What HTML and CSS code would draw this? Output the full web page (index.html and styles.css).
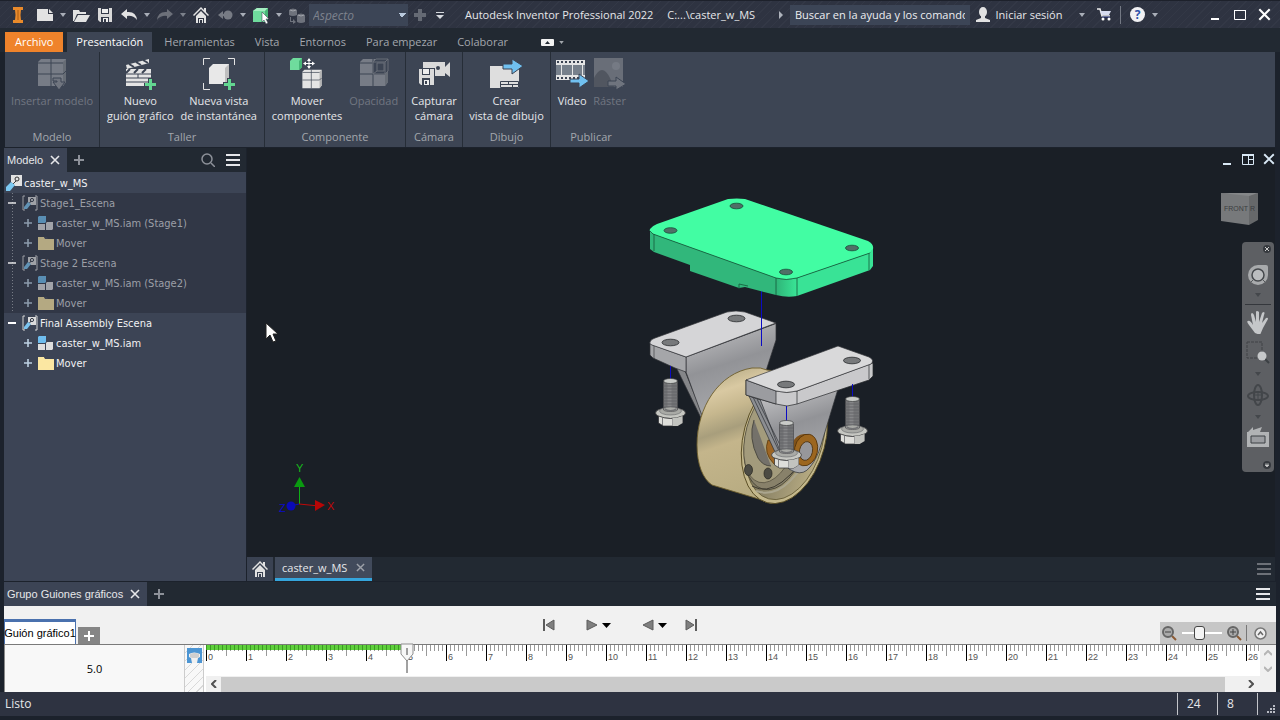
FILE: index.html
```html
<!DOCTYPE html>
<html lang="es">
<head>
    <meta charset="UTF-8">
    <meta name="viewport" content="width=device-width, initial-scale=1.0">
    <title>Autodesk Inventor Professional 2022</title>
    <link rel="stylesheet" href="styles.css">
</head>
<body>
    <!-- shared icons -->
    <svg class="defs" width="0" height="0" aria-hidden="true">
        <symbol id="caret" viewBox="0 0 6 4"><path d="M0 0h6L3 4z" fill="currentColor"/></symbol>
        <symbol id="close" viewBox="0 0 10 10"><path d="M1 1l8 8M9 1l-8 8" stroke="currentColor" stroke-width="1.6" fill="none"/></symbol>
        <symbol id="plus" viewBox="0 0 10 10"><path d="M5 0v10M0 5h10" stroke="currentColor" stroke-width="2" fill="none"/></symbol>
        <symbol id="minus" viewBox="0 0 10 10"><path d="M1 5h8" stroke="currentColor" stroke-width="2" fill="none"/></symbol>
        <symbol id="menu" viewBox="0 0 14 12"><path d="M0 1h14M0 6h14M0 11h14" stroke="currentColor" stroke-width="2" fill="none"/></symbol>
        <symbol id="home" viewBox="0 0 16 16">
            <path d="M0 8L8 0l3 3V1h2v4l3 3-1 1-7-7-7 7z" fill="#e2e2e2"/>
            <path d="M3 9l5-5 5 5v7h-2v-5H5v5H3z" fill="#e2e2e2"/>
            <path d="M6 12h1v4H6zM9 12h1v4H9zM7 12h2v1H7z" fill="#e2e2e2"/>
        </symbol>
        <symbol id="blocks" viewBox="0 0 32 32">
            <path d="M2 4l3-3h25v23l-3 4H2z" fill="#e4e4e4"/>
            <path d="M27 4l3-3v23l-3 4z" fill="#b4b4b4"/>
            <path d="M15 1v27M2 16h25l3-3M2 5h25" stroke="#3b4352" stroke-width="1" fill="none"/>
        </symbol>
        <symbol id="scene" viewBox="0 0 16 16">
            <path d="M3 1H1v14h2M13 1h2v14h-2" stroke="#d5d5d5" fill="none"/>
            <path d="M6 2h8v8H9L6 7z" fill="#dcdcdc"/>
            <circle cx="10" cy="5" r="1.6" fill="none" stroke="#333a47"/>
            <path d="M9 6l-3 4" stroke="#333a47"/>
            <path d="M2 12l4-5 3 2-4 5H2z" fill="#7cc4ef"/>
        </symbol>
        <symbol id="assembly" viewBox="0 0 16 16">
            <path d="M0 2l1-1h7v6L7 8H0z" fill="#6fbdee"/>
            <path d="M0 9h7v6H0zM8 8l1-1h6v7l-1 1H8z" fill="#dedede"/>
        </symbol>
        <symbol id="folder" viewBox="0 0 16 14">
            <path d="M0 1h6l2 2h8v11H0z" fill="#fbe7a2"/>
            <path d="M6 1h3l1 2H7z" fill="#3f4657"/>
        </symbol>
        <symbol id="bolt" viewBox="0 0 32 50">
            <path d="M9 5v28h14V5z" fill="#737476"/>
            <path d="M13 5v28h4V5z" fill="#858688"/>
            <path d="M9 9h14M9 12h14M9 15h14M9 18h14M9 21h14M9 24h14M9 27h14M9 30h14" stroke="#646568" stroke-width="1"/>
            <ellipse cx="16" cy="4" rx="7" ry="2.5" fill="#c9cbc8" stroke="#3c3d3f" stroke-width=".7"/>
            <ellipse cx="16" cy="36" rx="15" ry="5.5" fill="#c6c7c2" stroke="#2c2d2f" stroke-width=".7"/>
            <ellipse cx="16" cy="34" rx="11" ry="4" fill="#a9aaa6" stroke="#55565a" stroke-width=".5"/>
            <path d="M9 5v28c2 2 12 2 14 0V5" fill="none" stroke="#4a4b4e" stroke-width=".7"/>
            <path d="M10 31q6 4 12 0v2q-6 3-12 0z" fill="#737476"/>
            <path d="M4 39q12 5 24 0v7l-5 3H9l-5-3z" fill="#dededa" stroke="#2c2d2f" stroke-width=".7"/>
            <path d="M8 41v7M18 41v8" stroke="#55565a" stroke-width=".7"/>
            <path d="M18 41q6 0 10-2v7l-5 3h-5z" fill="#c2c3bf"/>
        </symbol>
    </svg>

    <header class="titlebar">
        <div class="quick">
            <span class="logo"><svg width="10" height="16" viewBox="0 0 10 16"><path d="M0 0h10v3H8q-1 5 0 10h2v3H0v-3h2q1-5 0-10H0z" fill="#e98a2b"/><path d="M5 3v10" stroke="#a65a13"/></svg></span>
            <button class="tool" aria-label="Nuevo"><svg width="16" height="12" viewBox="0 0 16 12"><path d="M0 0h11v5h5v7H0z" fill="#e2e2e2"/><path d="M12 0l4 4h-4z" fill="#e2e2e2"/></svg></button>
            <button class="drop" aria-label="Opciones de nuevo"><svg width="6" height="4"><use href="#caret"/></svg></button>
            <button class="tool" aria-label="Abrir"><svg width="17" height="13" viewBox="0 0 17 13"><path d="M0 12V1h6l1 2h6v2H4L1 12z" fill="#e2e2e2"/><path d="M5 6h12l-4 7H1z" fill="#e2e2e2"/></svg></button>
            <button class="tool" aria-label="Guardar"><svg width="14" height="14" viewBox="0 0 14 14"><path d="M0 0h14v14H2l-2-2z" fill="#d9d9d9"/><path d="M3 0h8v6H3z" fill="#343a49"/><path d="M4 1h6v4H4z" fill="#eee"/><path d="M3 9h8v5H3z" fill="#343a49"/><path d="M5 10h5v4H5z" fill="#eee"/><path d="M6 11h2v3H6z" fill="#343a49"/></svg></button>
            <button class="tool" aria-label="Deshacer"><svg width="16" height="12" viewBox="0 0 16 12"><path d="M0 5l6-5v3q9-1 10 8-4-5-10-4v3z" fill="#e2e2e2"/></svg></button>
            <button class="drop" aria-label="Lista deshacer"><svg width="6" height="4"><use href="#caret"/></svg></button>
            <button class="tool dim" aria-label="Rehacer"><svg width="16" height="12" viewBox="0 0 16 12"><path d="M16 5l-6-5v3Q1 2 0 11q4-5 10-4v3z" fill="#6c7079"/></svg></button>
            <button class="drop dim" aria-label="Lista rehacer"><svg width="6" height="4"><use href="#caret"/></svg></button>
            <button class="tool" aria-label="Inicio"><svg width="16" height="16"><use href="#home"/></svg></button>
            <button class="tool" aria-label="Volver"><svg width="15" height="10" viewBox="0 0 15 10"><path d="M0 5l5-4v3h3v2H5v3z" fill="#777b84"/><circle cx="10" cy="5" r="4.500" fill="#777b84"/></svg></button>
            <button class="drop" aria-label="Opciones de volver"><svg width="6" height="4"><use href="#caret"/></svg></button>
            <button class="tool" aria-label="Seleccionar"><svg width="17" height="17" viewBox="0 0 17 17"><path d="M0 4l4-3h11v11l-3 3H0z" fill="#6fdc9d"/><path d="M0 4l4-3h11l-3 3z" fill="#a5efc2"/><path d="M12 4l3-3v11l-3 3z" fill="#48b878"/><path d="M9 5l7 7h-3l2 4-2 1-2-4-2 2z" fill="#fff" stroke="#2f3544" stroke-width=".5"/></svg></button>
            <button class="drop" aria-label="Opciones de selección"><svg width="6" height="4"><use href="#caret"/></svg></button>
            <button class="tool dim" aria-label="Material"><svg width="17" height="17" viewBox="0 0 17 17"><g fill="#6e727c"><path d="M0 3q4-3 8 0v5q-4 2-8 0zM8 8q4-3 8 0v7q-4 2-8 0z"/><path d="M2 10v4h2v-2l3 3-3 2v-2H1v-5z"/></g><path d="M1 3q3 2 6 0M9 8q3 2 6 0" stroke="#a1a4ab" fill="none"/></svg></button>
            <select class="look" aria-label="Aspecto"><option>Aspecto</option></select>
            <button class="tool add" aria-label="Añadir"><svg width="12" height="12" viewBox="0 0 12 12"><path d="M4 0h4v4h4v4H8v4H4V8H0V4h4z" fill="#656a74"/></svg></button>
            <button class="drop last" aria-label="Personalizar"><svg width="8" height="7" viewBox="0 0 8 7"><path d="M0 0h8v1H0zM0 3h8L4 7z" fill="#d6d9de"/></svg></button>
        </div>
        <h1 class="app-title">Autodesk Inventor Professional 2022<span>C:...\caster_w_MS</span></h1>
        <div class="account">
            <button class="expand" aria-label="Contraer búsqueda"><svg width="4" height="8" viewBox="0 0 4 8"><path d="M0 0l4 4-4 4z" fill="#aeb3bc"/></svg></button>
            <input class="search" type="text" aria-label="Buscar" value="Buscar en la ayuda y los comandos">
            <button class="signin"><svg width="14" height="15" viewBox="0 0 14 15"><ellipse cx="7" cy="5" rx="4" ry="5" fill="#e2e2e2"/><path d="M5 9h4v2l5 2v2H0v-2l5-2z" fill="#e2e2e2"/></svg>Iniciar sesión</button>
            <button class="drop user-drop" aria-label="Cuenta"><svg width="6" height="4"><use href="#caret"/></svg></button>
            <button class="cart" aria-label="Tienda"><svg width="15" height="13" viewBox="0 0 15 13"><path d="M0 1h3l2 7h8" stroke="#eee" stroke-width="1.500" fill="none"/><path d="M3 3h11l-2 4H5z" fill="#d7dcf0"/><path d="M5 9h8" stroke="#1e2c7a"/><circle cx="6" cy="11" r="1.500" fill="#fff"/><circle cx="12" cy="11" r="1.500" fill="#fff"/></svg></button>
            <button class="help" aria-label="Ayuda">?</button>
            <button class="drop help-drop" aria-label="Opciones de ayuda"><svg width="6" height="4"><use href="#caret"/></svg></button>
            <button class="win" aria-label="Minimizar"><svg width="12" height="12" viewBox="0 0 12 12"><path d="M2 10h8" stroke="#fff" stroke-width="2"/></svg></button>
            <button class="win" aria-label="Maximizar"><svg width="12" height="12" viewBox="0 0 12 12"><path d="M.5 1.500h11v9H.5z" fill="none" stroke="#fff"/><path d="M0 1h12v1H0z" fill="#fff"/></svg></button>
            <button class="win" aria-label="Cerrar"><svg width="13" height="13"><use href="#close"/></svg></button>
        </div>
    </header>

    <nav class="tabs">
        <a href="#" class="tab file">Archivo</a>
        <a href="#" class="tab active">Presentación</a>
        <a href="#" class="tab">Herramientas</a>
        <a href="#" class="tab">Vista</a>
        <a href="#" class="tab">Entornos</a>
        <a href="#" class="tab">Para empezar</a>
        <a href="#" class="tab">Colaborar</a>
        <button class="collapse" aria-label="Minimizar cinta"><svg width="13" height="7" viewBox="0 0 13 7"><rect width="13" height="7" rx="1" fill="#f2f2f2"/><path d="M4 5l2.500-3L9 5z" fill="#222933"/></svg><svg width="5" height="3"><use href="#caret"/></svg></button>
    </nav>

    <section class="ribbon">
        <div class="group g-model">
            <div class="tools">
                <button class="big" disabled>
                    <svg width="32" height="32" viewBox="0 0 32 32"><use href="#blocks" width="32" height="32"/><path d="M17 20h8v4h4l-6 8-6-8h4v-1h-4z" fill="#cfcfcf" stroke="#3b4352"/></svg>
                    <span>Insertar modelo</span>
                </button>
            </div>
            <h2>Modelo</h2>
        </div>
        <div class="group g-taller">
            <div class="tools">
                <button class="big">
                    <svg width="32" height="32" viewBox="0 0 32 32"><path d="M2 7L25 1v4L3 11z" fill="#e4e4e4"/><path d="M5 6l5 3M12 4l5 3M19 2l5 3" stroke="#3b4352" stroke-width="2"/><path d="M2 11h25v17H2z" fill="#e4e4e4"/><path d="M6 11l-4 4M14 11l-4 4M22 11l-4 4" stroke="#3b4352" stroke-width="2"/><path d="M2 16h25M2 20h25M2 24h25M14 16v4" stroke="#3b4352"/><path d="M24 20h6v5h4v5h-4v4h-6v-4h-4v-5h4z" fill="#3b4352"/><path d="M25 21h3v4h4v3h-4v4h-3v-4h-4v-3h4z" fill="#63d791"/></svg>
                    <span>Nuevo<br>guión gráfico</span>
                </button>
                <button class="big">
                    <svg width="32" height="32" viewBox="0 0 32 32"><path d="M.5 7V.5H7M25 .5h6.500V7M.5 25v6.500H7" stroke="#e4e4e4" fill="none"/><path d="M6 10l4-4h16v17l-4 3H6z" fill="#e8e8e8"/><path d="M22 10l4-4v17l-4 3z" fill="#bfbfbf"/><path d="M24 20h5v4h4v5h-4v4h-5v-4h-4v-5h4z" fill="#3b4352"/><path d="M25 21h3v4h4v3h-4v4h-3v-4h-4v-3h4z" fill="#63d791"/></svg>
                    <span>Nueva vista<br>de instantánea</span>
                </button>
            </div>
            <h2>Taller</h2>
        </div>
        <div class="group g-comp">
            <div class="tools">
                <button class="big">
                    <svg width="34" height="32" viewBox="0 0 34 32"><path d="M0 3l3-3h9v9l-3 3H0z" fill="#6fdc9d"/><path d="M9 3l3-3v9l-3 3z" fill="#46b576"/><path d="M19 1v9M14 5.500h10" stroke="#fff" stroke-width="1"/><path d="M19 0l2 3h-4zM19 11l2-3h-4zM13 5.500l3-2v4zM25 5.500l-3-2v4z" fill="#fff"/><svg x="11" y="11" width="22" height="22"><use href="#blocks"/></svg></svg>
                    <span>Mover<br>componentes</span>
                </button>
                <button class="big" disabled>
                    <svg width="32" height="32" viewBox="0 0 32 32"><use href="#blocks" width="32" height="32"/><path d="M15 4l3-3h12v12l-3 3H15z" fill="#3b4352" stroke="#bbb"/><path d="M15 4h12v12M27 4l3-3M19 5h7v8h-7zM15 16l4-3" fill="none" stroke="#bbb"/></svg>
                    <span>Opacidad</span>
                </button>
            </div>
            <h2>Componente</h2>
        </div>
        <div class="group g-cam">
            <div class="tools">
                <button class="big">
                    <svg width="32" height="32" viewBox="0 0 32 32"><path d="M5 4h22v14H5z" fill="#dadada"/><path d="M27 9l5-5v15l-5-4z" fill="#dadada"/><circle cx="20" cy="10" r="2" fill="#3b4352"/><path d="M0 10h17v18H0z" fill="#3b4352"/><path d="M1 11h15v16H3l-2-2z" fill="#dadada"/><path d="M4 11h8v6H4zM4 20h8v7H4z" fill="#3b4352"/><path d="M5 11h6v5H5zM6 22h5v5H6z" fill="#eee"/><path d="M7 23h2v3H7z" fill="#3b4352"/></svg>
                    <span>Capturar<br>cámara</span>
                </button>
            </div>
            <h2>Cámara</h2>
        </div>
        <div class="group g-draw">
            <div class="tools">
                <button class="big">
                    <svg width="32" height="32" viewBox="0 0 32 32"><path d="M0 8h29v22H0z" fill="#dedede"/><path d="M10.500 23.500h18v6h-18zM11 26.500h18M18.500 23v3M22.500 27v3" fill="none" stroke="#3b4352"/><path d="M13 6h9V1l11 7-11 8v-5h-9z" fill="#70c0f0" stroke="#3b4352"/></svg>
                    <span>Crear<br>vista de dibujo</span>
                </button>
            </div>
            <h2>Dibujo</h2>
        </div>
        <div class="group g-publish">
            <div class="tools">
                <button class="big">
                    <svg width="32" height="32" viewBox="0 0 32 32"><path d="M0 2h29v20H0z" fill="#e4e4e4"/><path d="M1 4h28M1 20h28" stroke="#3b4352" stroke-width="2" stroke-dasharray="2 2"/><path d="M0 7h5v10H0zM6 7h10v10H6zM17 7h9v10h-9zM27 7h2v10h-2z" fill="#77808b"/><path d="M14 21h9v-5l10 7-10 7v-5h-9z" fill="#70c0f0" stroke="#3b4352"/></svg>
                    <span>Vídeo</span>
                </button>
                <button class="big" disabled>
                    <svg width="32" height="32" viewBox="0 0 32 32"><path d="M0 0h29v29H0z" fill="#bbb"/><circle cx="22" cy="8" r="4" fill="#ddd"/><path d="M0 20q8-16 16 0l4 9H0z" fill="#777"/><path d="M14 23h8v-4l10 7-10 6v-4h-8z" fill="#ccc" stroke="#3b4352"/></svg>
                    <span>Ráster</span>
                </button>
            </div>
            <h2>Publicar</h2>
        </div>
    </section>

    <main class="workspace">
        <aside class="browser">
            <div class="pane-tabs">
                <div class="pane-tab">Modelo<button aria-label="Cerrar panel"><svg width="10" height="10"><use href="#close"/></svg></button></div>
                <button class="pane-add" aria-label="Añadir panel"><svg width="10" height="10"><use href="#plus"/></svg></button>
                <button class="pane-find" aria-label="Buscar en panel"><svg width="14" height="14" viewBox="0 0 14 14"><circle cx="6" cy="6" r="5" fill="none" stroke="#8d9199" stroke-width="1.500"/><path d="M10 10l4 4" stroke="#8d9199" stroke-width="1.500"/></svg></button>
                <button class="pane-menu" aria-label="Menú de panel"><svg width="14" height="12"><use href="#menu"/></svg></button>
            </div>
            <div class="tree">
                <div class="node root"><svg width="16" height="16" viewBox="0 0 16 16"><path d="M5 0h11v11H9L5 7z" fill="#e2e2e2"/><circle cx="11" cy="4" r="2" fill="none" stroke="#333"/><path d="M10 6l-4 4" stroke="#333"/><path d="M0 12l5-5 4 3-5 6H0z" fill="#7cc9f2"/></svg>caster_w_MS</div>
                <div class="stage off">
                    <div class="node lvl1"><button aria-label="Contraer"><svg width="10" height="10"><use href="#minus"/></svg></button><svg width="16" height="16"><use href="#scene"/></svg>Stage1_Escena</div>
                    <div class="node lvl2"><button aria-label="Expandir"><svg width="8" height="8"><use href="#plus"/></svg></button><svg width="16" height="16"><use href="#assembly"/></svg>caster_w_MS.iam (Stage1)</div>
                    <div class="node lvl2"><button aria-label="Expandir"><svg width="8" height="8"><use href="#plus"/></svg></button><svg width="16" height="14"><use href="#folder"/></svg>Mover</div>
                </div>
                <div class="stage off">
                    <div class="node lvl1"><button aria-label="Contraer"><svg width="10" height="10"><use href="#minus"/></svg></button><svg width="16" height="16"><use href="#scene"/></svg>Stage 2 Escena</div>
                    <div class="node lvl2"><button aria-label="Expandir"><svg width="8" height="8"><use href="#plus"/></svg></button><svg width="16" height="16"><use href="#assembly"/></svg>caster_w_MS.iam (Stage2)</div>
                    <div class="node lvl2"><button aria-label="Expandir"><svg width="8" height="8"><use href="#plus"/></svg></button><svg width="16" height="14"><use href="#folder"/></svg>Mover</div>
                </div>
                <div class="stage">
                    <div class="node lvl1"><button aria-label="Contraer"><svg width="10" height="10"><use href="#minus"/></svg></button><svg width="16" height="16"><use href="#scene"/></svg>Final Assembly Escena</div>
                    <div class="node lvl2"><button aria-label="Expandir"><svg width="8" height="8"><use href="#plus"/></svg></button><svg width="16" height="16"><use href="#assembly"/></svg>caster_w_MS.iam</div>
                    <div class="node lvl2"><button aria-label="Expandir"><svg width="8" height="8"><use href="#plus"/></svg></button><svg width="16" height="14"><use href="#folder"/></svg>Mover</div>
                </div>
            </div>
        </aside>

        <section class="document">
            <div class="viewport">
                <svg class="model" width="243" height="320" viewBox="640 193 243 320">
                    <defs>
                        <linearGradient id="tread" x1="0" y1="0" x2=".25" y2="1">
                            <stop offset="0" stop-color="#a99f7b"/><stop offset=".22" stop-color="#d9c9a2"/>
                            <stop offset=".36" stop-color="#c6b78e"/><stop offset=".5" stop-color="#a89e7c"/>
                            <stop offset=".6" stop-color="#c4b58b"/><stop offset="1" stop-color="#b8ac82"/>
                        </linearGradient>
                        <linearGradient id="steel" x1="0" y1="0" x2=".3" y2="1">
                            <stop offset="0" stop-color="#c9c9cb"/><stop offset=".5" stop-color="#929397"/><stop offset="1" stop-color="#a9aaad"/>
                        </linearGradient>
                        <linearGradient id="corner"><stop offset="0" stop-color="#2fb478"/><stop offset="1" stop-color="#39e596"/></linearGradient>
                        <linearGradient id="rimside" x1="0" x2="1"><stop offset="0" stop-color="#6d6853"/><stop offset="1" stop-color="#b9ad84"/></linearGradient>
                    </defs>
                    <!-- rear bracket -->
                    <path d="M676 367l9 4 20 50-3-1z" fill="#858689" stroke="#303236" stroke-width=".7"/>
                    <path d="M686 357l90-33.500V340l-12 37-30 10-29 34-4-8-15-41z" fill="url(#steel)" stroke="#303236" stroke-width=".7"/>
                    <path d="M650 344l36 13v15l-11-4-22-10-3-3z" fill="#a5a6a9" stroke="#303236" stroke-width=".7"/>
                    <path d="M650 342q1-3 5-4l72-26q9-2 18 0l31 11-90 34-34-12q-3-1-2-3z" fill="#d5d5d7" stroke="#303236" stroke-width=".7"/>
                    <path d="M654 346v13" stroke="#303236" stroke-width=".6"/>
                    <g fill="#77797b" stroke="#26282b" stroke-width=".8"><ellipse cx="736.500" cy="318.500" rx="8.500" ry="3.300"/><ellipse cx="670.500" cy="342.500" rx="8.500" ry="3.300"/></g>
                    <!-- wheel -->
                    <path d="M767 370q-6-3-15-2c-33 5-55 39-55 77 0 20 6 34 15 40l60 18 25-70-4-60z" fill="url(#tread)" stroke="#6d5e2d" stroke-width=".9"/>
                    <ellipse cx="784.500" cy="438" rx="41" ry="67" transform="rotate(15 784.500 438)" fill="#c4b88c" stroke="#594d25" stroke-width=".9"/>
                    <ellipse cx="785" cy="438" rx="38" ry="63" transform="rotate(15 785 438)" fill="url(#rimside)" stroke="#655b36" stroke-width=".8"/>
                    <ellipse cx="777" cy="436" rx="31" ry="55" transform="rotate(15 777 436)" fill="#88816a" stroke="#3c392e" stroke-width=".7"/>
                    <ellipse cx="772" cy="434" rx="26" ry="50" transform="rotate(15 772 434)" fill="#a39b7c" stroke="#494536" stroke-width=".6"/>
                    <path d="M754 420q-6 18 4 38 5 8 13 8" stroke="#4d4b42" fill="#74716a"/>
                    <path d="M752 486q14 8 30-4 9-7 18-18" fill="none" stroke="#3d3a30" stroke-width="1"/>
                    <path d="M756 491q18 6 34-10 8-8 16-20" fill="none" stroke="#aaa58e" stroke-width="2"/>
                    <g fill="#4c4b43" stroke="#26251f" stroke-width=".7"><ellipse cx="748.500" cy="470" rx="4" ry="5.500"/><ellipse cx="768" cy="473.500" rx="4" ry="5.500"/></g>
                    <path d="M768 440q-5 13 6 24l8 3-4-24z" fill="#9c6524" stroke="#553205" stroke-width=".7"/>
                    <!-- front bracket -->
                    <path d="M749 396l12 4 22 50-8 2z" fill="#8c8e92" stroke="#2d2f33" stroke-width=".7"/>
                    <path d="M760 399l26 6 52-16-17 56q-4 14-11 22-6 8-15 5-7-2-10-8z" fill="url(#steel)" stroke="#2d2f33" stroke-width=".7"/>
                    <path d="M753 397l26 54M757 399l26 52" stroke="#2d2f33" stroke-width=".7"/>
                    <ellipse cx="803" cy="449" rx="12" ry="15" transform="rotate(12 803 449)" fill="#80521a"/>
                    <ellipse cx="806" cy="450" rx="11.500" ry="16" transform="rotate(12 806 450)" fill="#9c661f" stroke="#523209" stroke-width=".8"/>
                    <ellipse cx="806" cy="451" rx="6.500" ry="9.500" transform="rotate(12 806 451)" fill="#97979a" stroke="#4c310d" stroke-width=".8"/>
                    <path d="M746 380l30 11 11 1.500L797 391l76-28v13l-4 4-72 24-10 2-11-2-30-9z" fill="#c9c9cb" stroke="#26282b" stroke-width=".7"/>
                    <path d="M746 380l30 11v13l-30-9z" fill="#9b9ca0" stroke="#26282b" stroke-width=".7"/>
                    <path d="M746 380l92-34 31 11q6 3 2 7l-74 27q-10 3-21 0z" fill="#d9d9da" stroke="#303236" stroke-width=".7"/>
                    <path d="M797 391v13M869 365v14" stroke="#26282b" stroke-width=".7"/>
                    <g fill="#77797b" stroke="#26282b" stroke-width=".8"><ellipse cx="852" cy="360.500" rx="8.500" ry="3.300"/><ellipse cx="786" cy="384.500" rx="8.500" ry="3.300"/></g>
                    <!-- bolts and trails -->
                    <path d="M670.500 366v13M786.500 406v15M852.500 384v14M761.500 291v55" stroke="#0b0bc4" stroke-width="1"/>
                    <use href="#bolt" x="654.500" y="377" width="32" height="50"/>
                    <use href="#bolt" x="770.500" y="419" width="32" height="50"/>
                    <use href="#bolt" x="836.500" y="395" width="32" height="50"/>
                    <!-- top plate -->
                    <path d="M650 231l3 3 123 44v17l-31-8-6 1-49-17v-6l-36-13-4-3z" fill="#31b77b"/>
                    <path d="M776 278q10 3 21 0v18q-10 2-21-1z" fill="url(#corner)"/>
                    <path d="M797 278l73-25 3-5v18l-3 4-73 26z" fill="#39e396"/>
                    <path d="M650 229q2-3 7-5l71-25q9-1 17 0l123 42q6 3 5 8l-3 4-73 25q-10 3-21 0L653 234q-4-2-3-5z" fill="#42fda3"/>
                    <path d="M650 231l3 3 123 44q10 3 21 0l73-25M654 234v17M776 278v17M797 278v18M869 254v16M739 284v5M739 284l9 2" fill="none" stroke="#14593a" stroke-width=".8"/>
                    <g fill="#506f67" stroke="#174c37" stroke-width=".8"><ellipse cx="736.500" cy="206" rx="6.500" ry="2.800"/><ellipse cx="670.500" cy="230.500" rx="6.500" ry="2.800"/><ellipse cx="852" cy="248" rx="6.500" ry="2.800"/><ellipse cx="786" cy="272" rx="6.500" ry="2.800"/></g>
                </svg>

                <svg class="pointer" width="13" height="21" viewBox="0 0 13 21"><path d="M1 1v16l4-4 3 7 3-1-3-7h5z" fill="#fff" stroke="#222"/></svg>

                <svg class="triad" width="60" height="56" viewBox="0 0 60 56">
                    <path d="M22.500 22v21" stroke="#0fae15"/><path d="M17 26l5.500-10L28 26z" fill="#0a9a10"/>
                    <path d="M22 43l20 2" stroke="#c00808"/><path d="M38 39l10 5-10 6z" fill="#b80606"/>
                    <path d="M22 43l-8 2" stroke="#0b0bc8"/><circle cx="14" cy="45" r="4.500" fill="#0a0ab8"/>
                    <text x="19" y="11" fill="#17b81c">Y</text><text x="50" y="49" fill="#c00808">X</text><text x="2" y="51" fill="#0b0bc8">Z</text>
                </svg>

                <div class="doc-controls">
                    <button aria-label="Minimizar documento"><svg width="12" height="12" viewBox="0 0 12 12"><path d="M2 11h8" stroke="#d9e8f5" stroke-width="2"/></svg></button>
                    <button aria-label="Organizar ventanas"><svg width="12" height="11" viewBox="0 0 12 11"><path d="M.5 1h11v9.500H.5zM6.500 1v9M7 5.500h5" fill="none" stroke="#d9e8f5"/><path d="M0 0h12v2H0z" fill="#d9e8f5"/></svg></button>
                    <button aria-label="Cerrar documento"><svg width="12" height="12"><use href="#close"/></svg></button>
                </div>

                <svg class="cube" width="40" height="36" viewBox="0 0 40 36">
                    <path d="M1 1l28 1v31L1 29z" fill="#77797b"/><path d="M29 2l9-1v27l-9 5z" fill="#66686a"/><path d="M1 1h37l-9 3z" fill="#858789"/>
                    <text x="4" y="19" fill="#3c3e41">FRONT</text><text x="30" y="19" fill="#3c3e41">R</text>
                </svg>

                <div class="navbar">
                    <button aria-label="Cerrar barra" class="nav-x"><svg width="8" height="8" viewBox="0 0 8 8"><circle cx="4" cy="4" r="4" fill="#36393e"/><path d="M2 2l4 4M6 2L2 6" stroke="#ccc"/></svg></button>
                    <button aria-label="Rueda"><svg width="22" height="22" viewBox="0 0 22 22"><path d="M11 1h8q2 0 2 2v8a10 10 0 1 1-10-10z" fill="#a8aaac"/><circle cx="11" cy="11" r="6" fill="#bbbdbf" stroke="#45484c" stroke-width="1.500"/><path d="M7 15l-3 3M15 15l3 3" stroke="#55585b"/></svg></button>
                    <button aria-label="Opciones de rueda" class="nav-drop nav-line"><svg width="6" height="4"><use href="#caret"/></svg></button>
                    <button aria-label="Encuadre" class="nav-hand"><svg width="22" height="23" viewBox="0 0 22 23"><path d="M8 22l-6-8q-3-4-1-4 2-1 5 4L4 4q0-2 1-2t2 2l2 7V1q0-1 1-1t2 1v10l3-9q1-1 2-1 1 1 0 3l-2 8 4-5q2-1 2 1l-5 9-3 7z" fill="#c5c7c9"/></svg></button>
                    <button aria-label="Zoom"><svg width="24" height="24" viewBox="0 0 24 24"><path d="M1 2h15v16H1z" fill="none" stroke="#404347" stroke-dasharray="3 1"/><path d="M18 18l5 5" stroke="#3c4044" stroke-width="2"/><circle cx="16" cy="16" r="4.500" fill="#c6c8ca"/></svg></button>
                    <button aria-label="Opciones de zoom" class="nav-drop"><svg width="6" height="4"><use href="#caret"/></svg></button>
                    <button aria-label="Órbita"><svg width="24" height="24" viewBox="0 0 24 24"><g fill="none" stroke="#43464a" stroke-width="2"><ellipse cx="12" cy="12" rx="4" ry="10"/><ellipse cx="12" cy="13" rx="10" ry="4"/></g><path d="M12 8v8M8 12h8" stroke="#43464a"/></svg></button>
                    <button aria-label="Opciones de órbita" class="nav-drop"><svg width="6" height="4"><use href="#caret"/></svg></button>
                    <button aria-label="Mirar a"><svg width="22" height="22" viewBox="0 0 22 22"><path d="M0 6h22v15H0z" fill="#b1b3b5"/><path d="M1 6l5-5v3l9-3-2 5z" fill="#b1b3b5"/><path d="M4 10h14v7H4z" fill="#9b9da1" stroke="#3d4044"/></svg></button>
                    <button aria-label="Personalizar barra" class="nav-end"><svg width="8" height="8" viewBox="0 0 8 8"><circle cx="4" cy="4" r="4" fill="#36393e"/><path d="M2 3h4M2 4h4L4 6z" stroke="#ccc" stroke-width=".6" fill="#ccc"/></svg></button>
                </div>
            </div>
            <div class="doc-tabs">
                <button class="doc-home" aria-label="Inicio"><svg width="16" height="16"><use href="#home"/></svg></button>
                <div class="doc-tab">caster_w_MS<button aria-label="Cerrar documento"><svg width="9" height="9"><use href="#close"/></svg></button></div>
                <button class="doc-menu" aria-label="Lista de documentos"><svg width="14" height="12"><use href="#menu"/></svg></button>
            </div>
        </section>
    </main>

    <section class="story">
        <div class="pane-tabs story-tabs">
            <div class="pane-tab">Grupo Guiones gráficos<button aria-label="Cerrar panel"><svg width="10" height="10"><use href="#close"/></svg></button></div>
            <button class="pane-add" aria-label="Añadir panel"><svg width="10" height="10"><use href="#plus"/></svg></button>
            <button class="pane-menu" aria-label="Menú de panel"><svg width="14" height="12"><use href="#menu"/></svg></button>
        </div>
        <div class="story-top">
            <button class="board">Guión gráfico1</button>
            <button class="board-add" aria-label="Nuevo guión"><svg width="10" height="10"><use href="#plus"/></svg></button>
            <div class="playback">
                <button class="first" aria-label="Ir al inicio"><svg width="12" height="12" viewBox="0 0 12 12"><path d="M1 0v12" stroke="#5c5c5c" stroke-width="2"/><path d="M11 1v10L3 6z" stroke="#5c5c5c" fill="#7f7f7f"/></svg></button>
                <button class="play" aria-label="Reproducir"><svg width="12" height="12" viewBox="0 0 12 12"><path d="M1 1v10l10-5z" stroke="#5c5c5c" fill="#7f7f7f"/></svg><svg width="9" height="5" viewBox="0 0 9 5"><path d="M0 0h9L4.500 5z"/></svg></button>
                <button class="play" aria-label="Reproducir hacia atrás"><svg width="12" height="12" viewBox="0 0 12 12"><path d="M11 1v10L1 6z" stroke="#5c5c5c" fill="#7f7f7f"/></svg><svg width="9" height="5" viewBox="0 0 9 5"><path d="M0 0h9L4.500 5z"/></svg></button>
                <button class="end" aria-label="Ir al final"><svg width="12" height="12" viewBox="0 0 12 12"><path d="M11 0v12" stroke="#5c5c5c" stroke-width="2"/><path d="M1 1v10l8-5z" stroke="#5c5c5c" fill="#7f7f7f"/></svg></button>
            </div>
            <div class="zoom">
                <button aria-label="Reducir"><svg width="15" height="15" viewBox="0 0 15 15"><path d="M10 10l4 4" stroke="#8b5a33" stroke-width="2"/><circle cx="6" cy="6" r="5" fill="#aaa" stroke="#666" stroke-width="2"/><path d="M3 6h6" stroke="#444"/></svg></button>
                <input type="range" min="0" max="100" value="42" aria-label="Zoom de línea de tiempo">
                <button aria-label="Ampliar"><svg width="15" height="15" viewBox="0 0 15 15"><path d="M10 10l4 4" stroke="#8b5a33" stroke-width="2"/><circle cx="6" cy="6" r="5" fill="#aaa" stroke="#666" stroke-width="2"/><path d="M3 6h6M6 3v6" stroke="#444"/></svg></button>
                <button class="fold" aria-label="Contraer acciones"><svg width="13" height="13" viewBox="0 0 13 13"><circle cx="6.500" cy="6.500" r="5.500" fill="#eee" stroke="#777" stroke-width="1.500"/><path d="M4 8l2.500-3L9 8" stroke="#666" stroke-width="1.500" fill="none"/></svg></button>
            </div>
        </div>
        <div class="timeline">
            <div class="time">5.0</div>
            <div class="scratch"><svg width="15" height="15" viewBox="0 0 15 15"><rect width="15" height="15" fill="#4c95d3"/><path d="M2 6q5-3 11 0v3l-2 1-1 5H5l-1-5-2-1z" fill="#f1f1f1"/><path d="M3 6q5-2 9 0v3l-2 1H5L3 9z" fill="#cfcfcf"/></svg></div>
            <div class="track">
                <div class="ruler" id="ruler">
                    <div class="range"></div>
                    <svg class="playhead" width="14" height="31" viewBox="0 0 14 31"><path d="M1 1h12v10l-6 7-6-7z" fill="#f7f7f7" stroke="#8d8d8d"/><path d="M7 5v7M7 18v12" stroke="#444"/></svg>
                </div>
                <div class="scroll-x">
                    <button aria-label="Desplazar a la izquierda"><svg width="6" height="8" viewBox="0 0 6 8"><path d="M5 0L1 4l4 4" stroke="#505050" stroke-width="2" fill="none"/></svg></button>
                    <div class="thumb"></div>
                    <button class="right" aria-label="Desplazar a la derecha"><svg width="6" height="8" viewBox="0 0 6 8"><path d="M1 0l4 4-4 4" stroke="#505050" stroke-width="2" fill="none"/></svg></button>
                </div>
            </div>
            <div class="scroll-y">
                <button aria-label="Subir"><svg width="8" height="6" viewBox="0 0 8 6"><path d="M0 5l4-4 4 4" stroke="#b5b5b5" stroke-width="2" fill="none"/></svg></button>
                <button aria-label="Bajar"><svg width="8" height="6" viewBox="0 0 8 6"><path d="M0 1l4 4 4-4" stroke="#b5b5b5" stroke-width="2" fill="none"/></svg></button>
            </div>
        </div>
    </section>

    <footer class="status">
        <span class="ready">Listo</span>
        <span class="count">24</span>
        <span class="count">8</span>
        <span class="grip"><svg width="8" height="8" viewBox="0 0 8 8"><path d="M6 0h2v2H6zM3 3h2v2H3zM6 3h2v2H6zM0 6h2v2H0zM3 6h2v2H3zM6 6h2v2H6z" fill="#b9bcc4"/></svg></span>
    </footer>

    <script>
        // one cell per second on the ruler
        let ruler = document.getElementById('ruler');
        for (let i = 0; i <= 26; i++) {
            let cell = document.createElement('span');
            cell.className = 'second';
            cell.innerText = i;
            ruler.appendChild(cell);
        }
    </script>
</body>
</html>
```
FILE: styles.css
```css
* {
    box-sizing: border-box;
}

body {
    margin: 0;
    min-height: 100vh;
    display: flex;
    flex-direction: column;
    background: #1c222c;
    color: #e6e7ea;
    font-family: "Open Sans", "Noto Sans", sans-serif;
    font-size: 11px;
    line-height: 15px;
    padding-bottom: 4px;
}

button {
    font: inherit;
    color: inherit;
    background: none;
    border: none;
    padding: 0;
    display: flex;
    align-items: center;
    justify-content: center;
}

svg {
    display: block;
    flex-shrink: 0;
}

.defs {
    position: absolute;
}

/* title bar */
.titlebar {
    height: 28px;
    display: flex;
    align-items: center;
    background: repeating-linear-gradient(135deg, #2e3341 0, #2e3341 5px, #333846 5px, #333846 6px);
    border-top: 1px solid #1d212b;
}

.quick {
    display: flex;
    align-items: center;
    padding: 1px 0 0 6px;
}

.logo {
    width: 27px;
    padding-left: 7px;
}

.tool {
    width: 24px;
    height: 24px;
}

.drop {
    width: 12px;
    height: 24px;
    color: #a9aeb8;
}

.dim {
    color: #7c818b;
}

.look {
    width: 99px;
    height: 22px;
    appearance: none;
    border: none;
    border-radius: 0;
    padding: 0 4px;
    color: #7d828d;
    font: italic 12px "Open Sans", "Noto Sans", sans-serif;
    background: #3c4556 conic-gradient(from -45deg at 50% 100%, #b9c9dc 90deg, #3c4556 0) right 2px center / 8px 4px no-repeat;
}

.last {
    width: 16px;
}

.app-title {
    margin: 0 0 0 17px;
    font-size: 11px;
    font-weight: normal;
    white-space: nowrap;
}

.app-title span {
    margin-left: 14px;
}

.account {
    margin-left: auto;
    display: flex;
    align-items: center;
    padding-right: 3px;
}

.expand {
    width: 18px;
}

.search {
    width: 180px;
    height: 20px;
    border: none;
    padding: 0 5px;
    background: #3c4556;
    color: #eceef1;
    font: 11px "Open Sans", "Noto Sans", sans-serif;
}

.signin {
    gap: 6px;
    margin-left: 4px;
    width: 90px;
    white-space: nowrap;
}

.user-drop {
    margin-left: 12px;
}

.cart {
    width: 33px;
    height: 18px;
    border-right: 1px solid #747984;
}

.help {
    width: 15px;
    height: 15px;
    margin-left: 9px;
    border-radius: 50%;
    background: #f1f1f3;
    color: #2d50a8;
    font-size: 12px;
    font-weight: bold;
    line-height: 14px;
}

.help-drop {
    width: 20px;
    margin-right: 37px;
}

.win {
    width: 25px;
    height: 20px;
    color: #fff;
}

/* ribbon tabs */
.tabs {
    height: 24px;
    padding: 4px 5px 0;
    display: flex;
    background: #222932;
}

.tab {
    padding: 2px 0 0 0;
    margin-right: 20px;
    color: #a3a7ad;
    text-decoration: none;
}

.tab.file {
    background: #ef832b;
    color: #fff;
    padding: 2px 10px 0;
    margin-right: 4px;
}

.tab.active {
    background: #3d4554;
    color: #fff;
    padding: 2px 9px 0;
    margin-right: 12px;
}

.collapse {
    height: 20px;
    gap: 5px;
    margin-left: 13px;
    color: #a3a7ad;
}

.ribbon {
    height: 95px;
    margin: 0 5px;
    display: flex;
    background: #3d4554;
}

.group {
    display: flex;
    flex-direction: column;
    border-right: 1px solid #262d37;
}

.g-model { width: 95px; }
.g-taller { width: 165px; }
.g-comp { width: 141px; }
.g-cam { width: 57px; }
.g-draw { width: 88px; }
.g-publish { width: 80px; border-right: none; }

.tools {
    flex: 1;
    display: flex;
    justify-content: space-evenly;
}

.big {
    flex-direction: column;
    justify-content: flex-start;
    padding-top: 6px;
    white-space: nowrap;
}

.big span {
    margin-top: 3px;
}

.big:disabled {
    color: #717681;
}

.big:disabled svg {
    opacity: 0.35;
}

.group h2 {
    margin: 0 0 3px;
    font-size: 11px;
    font-weight: normal;
    text-align: center;
    color: #a3a7ad;
}

/* model browser */
.workspace {
    flex: 1;
    display: flex;
    margin: 1px 5px 0 4px;
}

.browser {
    width: 242px;
    display: flex;
    flex-direction: column;
    background: #3c4455;
    font-family: "DejaVu Sans Condensed", "DejaVu Sans", sans-serif;
    font-size: 11px;
}

.pane-tabs {
    height: 24px;
    display: flex;
    background: #222932;
    font-family: "Liberation Sans", Arial, sans-serif;
    font-size: 11px;
}

.pane-tab {
    display: flex;
    align-items: center;
    gap: 7px;
    padding: 0 7px 0 3px;
    background: #3c4455;
}

.pane-add {
    width: 24px;
    color: #8d9199;
}

.pane-find {
    margin-left: auto;
    width: 24px;
}

.pane-menu {
    width: 26px;
}

.tree {
    flex: 1;
    padding-top: 1px;
}

.node {
    height: 20px;
    display: flex;
    align-items: center;
    gap: 2px;
    color: #f1f1f3;
    white-space: nowrap;
}

.root {
    padding-left: 2px;
}

.off {
    background-color: #313746;
}

.off .node {
    color: #9c9fa6;
}

.off svg {
    opacity: 0.65;
}

.node button {
    width: 16px;
}

.lvl1 button {
    color: #fff;
}

.lvl2 button {
    color: #bcd0e2;
}

/* dotted branch line */
.stage {
    background-image: repeating-linear-gradient(to bottom, #777c86 0, #777c86 1px, transparent 1px, transparent 3px);
    background-size: 1px 100%;
    background-position: 8px 0;
    background-repeat: no-repeat;
}

.stage:last-child {
    background-image: none;
}

.lvl2 {
    padding-left: 16px;
}

/* graphics window */
.document {
    flex: 1;
    min-width: 0;
    margin-left: 1px;
    display: flex;
    flex-direction: column;
}

.viewport {
    flex: 1;
    position: relative;
    display: flex;
    align-items: center;
    justify-content: center;
    background: #1a1f26;
}

.pointer {
    position: absolute;
    left: 18px;
    top: 174px;
}

.triad {
    position: absolute;
    left: 30px;
    bottom: 40px;
    font: 11px "Liberation Sans", sans-serif;
}

.doc-controls {
    position: absolute;
    top: 5px;
    right: 0;
    display: flex;
    gap: 9px;
    color: #d9e8f5;
}

.cube {
    position: absolute;
    top: 44px;
    right: 15px;
    font: 7px "Liberation Sans", sans-serif;
}

.navbar {
    position: absolute;
    top: 94px;
    right: 1px;
    width: 32px;
    height: 230px;
    display: flex;
    flex-direction: column;
    align-items: center;
    border-radius: 4px;
    background: #5d5f63;
    color: #44474b;
}

.nav-x,
.nav-end {
    align-self: flex-end;
    margin-right: 3px;
}

.nav-x {
    margin: 3px 3px 11px 0;
}

.nav-drop {
    width: 26px;
    height: 19px;
}

.nav-line {
    border-bottom: 1px solid #34373c;
}

.nav-hand {
    margin: 6px 0;
}

.nav-end {
    margin-top: auto;
    margin-bottom: 3px;
}

.doc-tabs {
    height: 24px;
    display: flex;
    background: #222932;
}

.doc-home {
    width: 26px;
    background: #3a4252;
}

.doc-tab {
    display: flex;
    align-items: center;
    gap: 9px;
    margin-left: 2px;
    padding: 0 7px;
    background: #414a5b;
    border-bottom: 3px solid #35a5dc;
}

.doc-tab button {
    color: #9da1a9;
}

.doc-menu {
    margin-left: auto;
    padding-right: 4px;
    color: #6d7178;
}

/* storyboard */
.story {
    margin: 1px 4px 0;
}

.story-tabs .pane-menu {
    margin-left: auto;
}

.story-top {
    height: 39px;
    display: flex;
    align-items: flex-end;
    background: #f1f1f1;
    border-bottom: 1px solid #7a7a7a;
    color: #000;
}

.board {
    width: 72px;
    height: 25px;
    background: #fff;
    border: 1px solid #4a71ae;
    border-top: 3px solid #4a71ae;
    border-bottom: none;
    font-family: "Liberation Sans", Arial, sans-serif;
    font-size: 11px;
    white-space: nowrap;
}

.board-add {
    width: 22px;
    height: 17px;
    margin-left: 2px;
    background: #858585;
    color: #fff;
}

.playback {
    flex: 1;
    align-self: center;
    display: flex;
    justify-content: center;
    padding-right: 20px;
}

.play {
    gap: 4px;
    margin-left: 31px;
}

.end {
    margin-left: 18px;
}

.zoom {
    width: 116px;
    height: 22px;
    display: flex;
    align-items: center;
    padding-left: 2px;
    background: #c6c6c6;
}

.zoom input {
    width: 40px;
    height: 16px;
    margin: 0 5px;
    appearance: none;
    background: linear-gradient(#fff, #fff) center / 100% 2px no-repeat;
}

.zoom input::-webkit-slider-thumb {
    appearance: none;
    width: 11px;
    height: 14px;
    background: #f4f4f4;
    border: 1px solid #444;
    border-radius: 3px;
}

.fold {
    height: 16px;
    margin-left: 4px;
    padding-left: 7px;
    border-left: 1px solid #777;
}

.timeline {
    height: 47px;
    display: flex;
    background: #fff;
    color: #000;
}

.time {
    width: 180px;
    display: flex;
    align-items: center;
    justify-content: center;
    background: #f8f8f8;
    border-left: 1px solid #8a8a8a;
    font-size: 11px;
}

.scratch {
    width: 20px;
    padding: 3px 0 0 2px;
    border-left: 1px solid #ccc;
    border-right: 1px solid #ccc;
    background: repeating-linear-gradient(135deg, #f8f8f8 0, #f8f8f8 5px, #d9d9d9 5px, #d9d9d9 6px);
}

.track {
    flex: 1;
    min-width: 0;
    display: flex;
    flex-direction: column;
    padding-left: 2px;
}

.ruler {
    flex: 1;
    position: relative;
    display: flex;
    overflow-x: clip;
}

.second {
    width: 40px;
    height: 16px;
    flex-shrink: 0;
    padding: 7px 0 0 2px;
    font: 9px/11px "Liberation Sans", sans-serif;
    color: #555;
    background:
        linear-gradient(#000, #000) 0 0 / 1px 16px no-repeat,
        linear-gradient(#999, #999) 20px 0 / 1px 11px no-repeat,
        repeating-linear-gradient(to right, #999 0, #999 1px, transparent 1px, transparent 4px) 0 0 / 100% 6px no-repeat;
}

.range {
    position: absolute;
    left: 0;
    top: 0;
    width: 196px;
    height: 5px;
    background: repeating-linear-gradient(to right, #3a9a22 0, #3a9a22 1px, #5fd03c 1px, #5fd03c 4px);
}

.playhead {
    position: absolute;
    left: 194px;
    top: -2px;
    z-index: 1;
}

.scroll-x {
    height: 16px;
    display: flex;
    align-items: center;
    background: #f0f0f0;
}

.scroll-x button {
    width: 15px;
    height: 15px;
}

.scroll-x .thumb {
    flex: 1;
    height: 15px;
    background: #cacaca;
}

.scroll-x .right {
    width: 35px;
    padding-left: 16px;
}

.scroll-y {
    width: 16px;
    display: flex;
    flex-direction: column;
    gap: 10px;
    padding-top: 5px;
    align-items: center;
    background: #f0f0f0;
}

.status {
    height: 24px;
    display: flex;
    background: #2e3341;
    font-size: 12px;
    line-height: 24px;
}

.ready {
    flex: 1;
    padding-left: 5px;
}

.count {
    width: 40px;
    height: 22px;
    margin-top: 1px;
    padding-left: 9px;
    line-height: 22px;
    border-left: 1px solid #c3c5ca;
}

.grip {
    width: 23px;
    height: 22px;
    margin-top: 1px;
    padding: 12px 0 0 9px;
    border-left: 1px solid #c3c5ca;
}
```
